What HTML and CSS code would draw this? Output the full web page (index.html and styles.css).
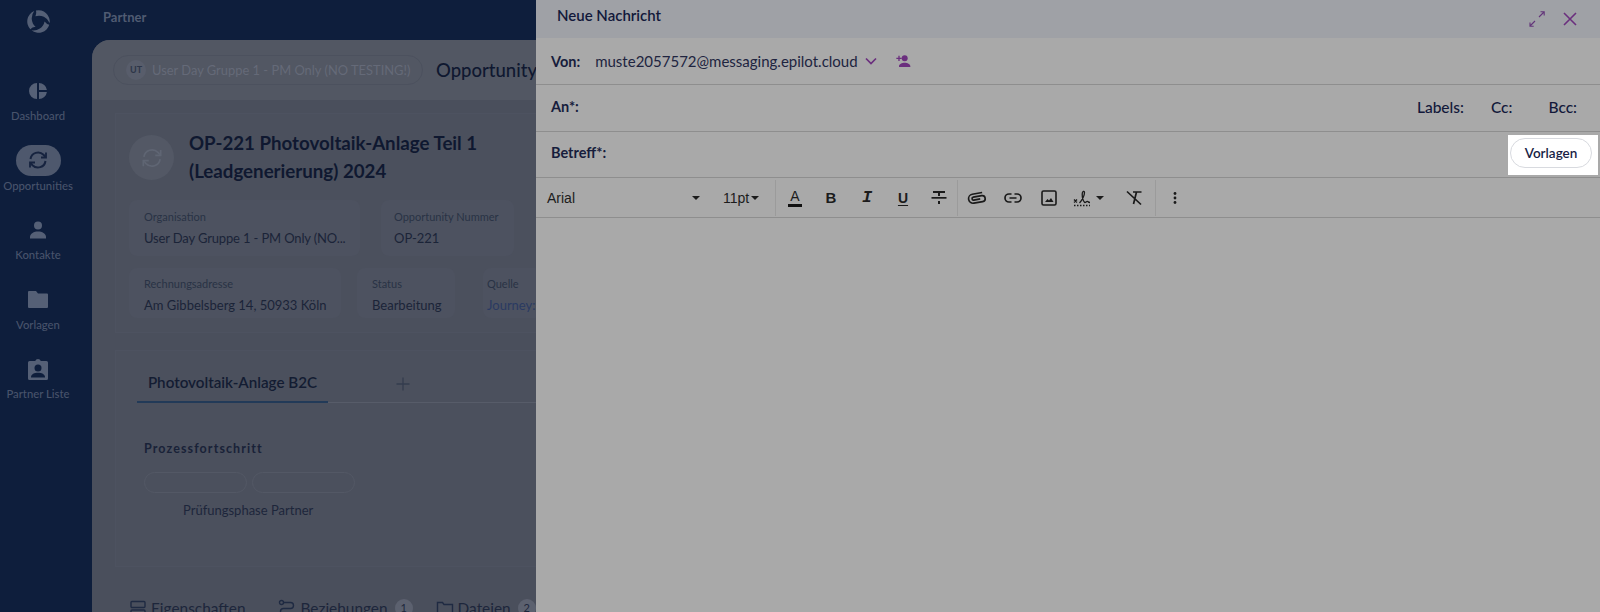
FILE: index.html
```html
<!DOCTYPE html>
<html lang="de">
<head>
    <meta charset="UTF-8">
    <title>Neue Nachricht</title>
    <link rel="stylesheet" href="styles.css">
</head>
<body>
    <div class="app">
        <div class="sidebar">
            <div class="logo">
                <svg width="25" height="25" viewBox="0 0 24 24" fill="#556076">
                    <path d="M9.500 1.500A10.800 10.800 0 0 1 22.700 13.500 11 11 0 0 0 9 7Q10.300 4 9.500 1.500Z"/>
                    <path d="M9.500 1.500A10.800 10.800 0 0 1 22.700 13.500 11 11 0 0 0 9 7Q10.300 4 9.500 1.500Z" transform="rotate(120 12 12)"/>
                    <path d="M9.500 1.500A10.800 10.800 0 0 1 22.700 13.500 11 11 0 0 0 9 7Q10.300 4 9.500 1.500Z" transform="rotate(240 12 12)"/>
                </svg>
            </div>
            <div class="nav_item">
                <div class="nav_icon">
                    <svg width="24" height="24" viewBox="0 0 24 24" fill="#556076"><path d="M11 4v16a8 8 0 0 1 0-16Zm2 0a8 8 0 0 1 7.900 7H13Zm0 9h7.900A8 8 0 0 1 13 20Z"/></svg>
                </div>
                <span>Dashboard</span>
            </div>
            <div class="nav_item nav_active">
                <div class="nav_icon">
                    <svg width="24" height="24" viewBox="0 0 24 24" fill="none" stroke="#16233f" stroke-width="2"><path d="M4.500 11a7.600 7.600 0 0 1 13-4.200L19.500 9"/><path d="M19.500 13a7.600 7.600 0 0 1-13 4.200L4.500 15"/><path d="M20 4.500V9.500h-5" stroke-width="1.800"/><path d="M4 19.500V14.500h5" stroke-width="1.800"/></svg>
                </div>
                <span>Opportunities</span>
            </div>
            <div class="nav_item">
                <div class="nav_icon">
                    <svg width="24" height="24" viewBox="0 0 24 24" fill="#556076"><circle cx="12" cy="7.500" r="4"/><path d="M4 19c0-3.500 4-5.500 8-5.500s8 2 8 5.500v1.500H4Z"/></svg>
                </div>
                <span>Kontakte</span>
            </div>
            <div class="nav_item">
                <div class="nav_icon">
                    <svg width="24" height="24" viewBox="0 0 24 24" fill="#556076"><path d="M3 4h7l2 2.500h9a1 1 0 0 1 1 1V20a1 1 0 0 1-1 1H3a1 1 0 0 1-1-1V5a1 1 0 0 1 1-1Z"/></svg>
                </div>
                <span>Vorlagen</span>
            </div>
            <div class="nav_item">
                <div class="nav_icon">
                    <svg width="24" height="24" viewBox="0 0 24 24"><path fill="#556076" d="M3.500 4h5.700a3 3 0 0 1 5.600 0h5.700a1.500 1.500 0 0 1 1.500 1.500v16a1.500 1.500 0 0 1-1.500 1.500h-17A1.500 1.500 0 0 1 2 21.500v-16A1.500 1.500 0 0 1 3.500 4Z"/><circle cx="12" cy="11" r="3.500" fill="#0e1e3c"/><path fill="#0e1e3c" d="M5 20c0-2.800 3.500-4.300 7-4.300s7 1.500 7 4.300v.5H5Z"/></svg>
                </div>
                <span>Partner Liste</span>
            </div>
        </div>

        <div class="main">
            <div class="topbar">Partner</div>
            <div class="panel">
                <div class="panel_head">
                    <div class="org_pill"><span class="org_badge">UT</span>User Day Gruppe 1 - PM Only (NO TESTING!)</div>
                    <div class="panel_title">Opportunity</div>
                </div>
                <div class="card card_info">
                    <div class="card_top">
                        <div class="round_icon">
                            <svg width="26" height="26" viewBox="0 0 24 24" fill="none" stroke="#5f6573" stroke-width="1.600"><path d="M4.500 11a7.600 7.600 0 0 1 13-4.200L19.500 9"/><path d="M19.500 13a7.600 7.600 0 0 1-13 4.200L4.500 15"/><path d="M20 4.500V9.500h-5"/><path d="M4 19.500V14.500h5"/></svg>
                        </div>
                        <h2>OP-221 Photovoltaik-Anlage Teil 1 (Leadgenerierung) 2024</h2>
                    </div>
                    <div class="fields fields_one">
                        <div class="field field_org"><label>Organisation</label><p>User Day Gruppe 1 - PM Only (NO...</p></div>
                        <div class="field field_num"><label>Opportunity Nummer</label><p>OP-221</p></div>
                    </div>
                    <div class="fields fields_two">
                        <div class="field field_addr"><label>Rechnungsadresse</label><p>Am Gibbelsberg 14, 50933 Köln</p></div>
                        <div class="field field_status"><label>Status</label><p>Bearbeitung</p></div>
                        <div class="field field_source"><label>Quelle</label><p class="link">Journey:</p></div>
                    </div>
                </div>
                <div class="card card_process">
                    <div class="tabs">
                        <div class="tab_active">Photovoltaik-Anlage B2C</div>
                        <div class="tab_add">
                            <svg width="16" height="16" viewBox="0 0 16 16" stroke="#343c4e" stroke-width="1.300"><path d="M8 1.500v13M1.500 8h13"/></svg>
                        </div>
                    </div>
                    <div class="process">
                        <h3>Prozessfortschritt</h3>
                        <div class="steps">
                            <div class="step"></div>
                            <div class="step"></div>
                        </div>
                        <p>Prüfungsphase Partner</p>
                    </div>
                </div>
                <div class="bottom_tabs">
                    <div class="bottom_tab">
                        <svg width="18" height="18" viewBox="0 0 18 18" fill="none" stroke="#1f2a42" stroke-width="1.400"><rect x="2" y="2.500" width="14" height="6" rx="1"/><rect x="2" y="11" width="14" height="6" rx="1"/></svg>
                        Eigenschaften
                    </div>
                    <div class="bottom_tab tab_rel">
                        <svg width="18" height="18" viewBox="0 0 18 18" fill="none" stroke="#1f2a42" stroke-width="1.400"><circle cx="3.500" cy="3.500" r="2"/><path d="M5.500 3.500h7a3 3 0 0 1 0 6h-7a3 3 0 0 0 0 6H15"/></svg>
                        Beziehungen<span class="count">1</span>
                    </div>
                    <div class="bottom_tab tab_files">
                        <svg width="18" height="18" viewBox="0 0 18 18" fill="none" stroke="#1f2a42" stroke-width="1.400"><path d="M1.500 3.500h5l1.500 2h8.500V16h-15Z"/></svg>
                        Dateien<span class="count">2</span>
                    </div>
                </div>
            </div>
        </div>

        <div class="composer">
            <div class="composer_head">
                <span>Neue Nachricht</span>
                <div class="head_actions">
                    <svg width="18" height="18" viewBox="0 0 18 18" fill="none" stroke="#63357a" stroke-width="1.100"><path d="M11 7 16 2M12.500 1.800h3.700V5.500M7 11 2 16M2 12.500v3.700h3.700"/></svg>
                    <svg width="16" height="16" viewBox="0 0 16 16" fill="none" stroke="#6b2f7e" stroke-width="1.600"><path d="m2 2 12 12M14 2 2 14"/></svg>
                </div>
            </div>
            <div class="row">
                <label>Von:</label>
                <span class="sender">muste2057572@messaging.epilot.cloud</span>
                <svg class="chevron" width="14" height="14" viewBox="0 0 14 14" fill="none" stroke="#6b2f7e" stroke-width="1.700"><path d="m2 4.500 5 5 5-5"/></svg>
                <svg class="add_person" width="16" height="16" viewBox="0 0 24 24" fill="#6b2f7e"><circle cx="14.500" cy="8" r="4.500"/><path d="M6 20c0-3.500 4.500-5.500 8.500-5.500S23 16.500 23 20v1H6ZM5 7V4h2v3h3v2H7v3H5V9H2V7Z"/></svg>
            </div>
            <div class="row row_to">
                <label>An*:</label>
                <div class="row_links">
                    <span>Labels:</span>
                    <span>Cc:</span>
                    <span>Bcc:</span>
                </div>
            </div>
            <div class="row row_subject">
                <label>Betreff*:</label>
                <div class="template_box"><button class="btn_template">Vorlagen</button></div>
            </div>
            <div class="toolbar">
                <div class="tool_select select_font">Arial<i class="caret"></i></div>
                <div class="tool_select select_size">11pt<i class="caret"></i></div>
                <div class="tool_group">
                    <div class="tool tool_color">A</div>
                    <div class="tool tool_bold">B</div>
                    <div class="tool tool_italic">I</div>
                    <div class="tool tool_under">U</div>
                    <div class="tool tool_strike">
                        <svg width="24" height="24" viewBox="0 0 24 24" fill="#1a1a1a"><rect x="6" y="5" width="12" height="2"/><rect x="11" y="7" width="2" height="3"/><rect x="4.500" y="11" width="15" height="1.700"/><rect x="11" y="15" width="2" height="3"/></svg>
                    </div>
                </div>
                <div class="tool_group">
                    <div class="tool">
                        <svg width="24" height="24" viewBox="0 0 24 24" fill="none" stroke="#1a1a1a" stroke-width="1.700"><path transform="rotate(-10 12 12)" d="M15 13.500H8.500a1.500 1.500 0 0 1 0-3H17a3 3 0 0 1 0 6H8a4.500 4.500 0 0 1 0-9h10"/></svg>
                    </div>
                    <div class="tool">
                        <svg width="24" height="24" viewBox="0 0 24 24" fill="none" stroke="#1a1a1a" stroke-width="1.700"><path d="M10.500 8H8a4 4 0 0 0 0 8h2.500M13.500 8H16a4 4 0 0 1 0 8h-2.500M8.500 12h7"/></svg>
                    </div>
                    <div class="tool">
                        <svg width="24" height="24" viewBox="0 0 24 24"><rect x="5" y="5" width="14" height="14" rx="1.500" fill="none" stroke="#1a1a1a" stroke-width="1.600"/><path fill="#1a1a1a" d="m8 16 2.500-3 1.500 1.500 2-2.500 2.500 4Z"/></svg>
                    </div>
                    <div class="tool tool_sign">
                        <svg width="24" height="24" viewBox="0 0 24 24" fill="none" stroke="#1a1a1a" stroke-width="1.300"><path d="m4 13.500 3 3M7 13.500l-3 3M9.500 17c3-3 5-8 5-10.500 0-2-2.300-1.500-2.300 1.500 0 3 1 7 2.500 8.500 1 .5 2-2 3-1 .5.500 1 1 2.300 1"/><path d="M4 19.500h16" stroke-dasharray="1.500 1.500"/></svg>
                        <i class="caret"></i>
                    </div>
                    <div class="tool">
                        <svg width="24" height="24" viewBox="0 0 24 24" fill="none" stroke="#1a1a1a" stroke-width="1.700"><path d="M11 6h8.500M14.500 6 11.500 18M5 5.500l14 13"/></svg>
                    </div>
                </div>
                <div class="tool_group tool_group_last">
                    <div class="tool">
                        <svg width="24" height="24" viewBox="0 0 24 24" fill="#1a1a1a"><circle cx="12" cy="7.500" r="1.400"/><circle cx="12" cy="12" r="1.400"/><circle cx="12" cy="16.500" r="1.400"/></svg>
                    </div>
                </div>
            </div>
            <div class="editor"></div>
        </div>
    </div>
</body>
</html>
```
FILE: styles.css
```css
* {
    margin: 0;
    padding: 0;
    box-sizing: border-box;
}
body {
    font-family: "Lato", "Open Sans", sans-serif;
    overflow: hidden;
    height: 612px;
    background-color: #0e1e3c;
}
.app {
    display: flex;
    height: 612px;
    position: relative;
    overflow: hidden;
}

/* sidebar */
.sidebar {
    width: 92px;
    flex-shrink: 0;
    padding-right: 16px;
    background-color: #0e1e3c;
}
.logo {
    height: 42px;
    display: flex;
    align-items: center;
    justify-content: center;
    margin-bottom: 33px;
}
.nav_item {
    height: 69.500px;
    display: flex;
    flex-direction: column;
    align-items: center;
    font-size: 11.300px;
    color: #48536b;
    font-weight: 500;
}
.nav_icon {
    width: 45px;
    height: 31px;
    display: flex;
    align-items: center;
    justify-content: center;
    border-radius: 16px;
    margin-bottom: 3px;
}
.nav_active .nav_icon {
    background-color: #4e586d;
}

/* page behind */
.main {
    flex: 1;
    min-width: 0;
    display: flex;
    flex-direction: column;
}
.topbar {
    height: 40px;
    padding: 0 11px;
    font-size: 13px;
    font-weight: 700;
    color: #505b72;
    line-height: 35px;
}
.panel {
    flex: 1;
    background-color: #4a4f5c;
    border-top-left-radius: 18px;
    overflow: hidden;
}
.panel_head {
    height: 60px;
    padding: 0 21px;
    display: flex;
    align-items: center;
    background-color: #525763;
}
.org_pill {
    width: 310px;
    height: 30px;
    border: 1px solid #4c515e;
    border-radius: 15px;
    display: flex;
    align-items: center;
    padding-left: 12px;
    font-size: 12.900px;
    color: #656a78;
    white-space: nowrap;
    flex-shrink: 0;
}
.org_badge {
    width: 20px;
    height: 20px;
    margin-right: 6px;
    border-radius: 50%;
    background-color: #585d6b;
    color: #2d3649;
    font-size: 9px;
    font-weight: 700;
    line-height: 20px;
    text-align: center;
    flex-shrink: 0;
}
.panel_title {
    margin-left: 13px;
    font-size: 18.500px;
    font-weight: 500;
    color: #0f1830;
}
.card {
    margin-left: 23px;
    background-color: #4b505d;
    border: 1px solid #4d5260;
    border-right: none;
}
.card_info {
    height: 220px;
    margin-top: 13px;
    padding: 21px 13px 0;
}
.card_top {
    display: flex;
    height: 65px;
}
.round_icon {
    width: 45px;
    height: 45px;
    border-radius: 50%;
    background-color: #535865;
    display: flex;
    align-items: center;
    justify-content: center;
    flex-shrink: 0;
    margin-right: 15px;
}
.card_top h2 {
    width: 330px;
    margin-top: -6px;
    font-size: 18.700px;
    line-height: 28px;
    font-weight: 700;
    color: #0f1830;
}
.fields {
    display: flex;
    white-space: nowrap;
}
.field {
    background-color: #4d5260;
    border-radius: 8px;
    padding: 9px 10px 0 15px;
    height: 56px;
    flex-shrink: 0;
    overflow: hidden;
}
.field label {
    display: block;
    font-size: 11px;
    line-height: 16px;
    color: #293245;
}
.field p {
    margin-top: 1px;
    font-size: 13px;
    line-height: 24px;
    color: #1b2438;
}
.field p.link {
    color: #2a3a62;
}
.field_org p {
    letter-spacing: -0.150px;
}
.fields_one {
    gap: 21px;
}
.field_org {
    width: 231px;
}
.field_num {
    width: 133px;
    padding-left: 13px;
}
.fields_two {
    margin-top: 12px;
}
.fields_two .field {
    height: 50px;
    padding-top: 8px;
}
.field_addr {
    width: 212px;
}
.field_status {
    width: 98px;
    margin-left: 16px;
}
.field_source {
    width: 60px;
    margin-left: 28px;
    padding: 8px 0 0 4px;
}
.card_process {
    height: 217px;
    margin-top: 17px;
}
.tabs {
    margin: 15px 0 0 21px;
    display: flex;
    align-items: flex-end;
    height: 37px;
    border-bottom: 1px solid #575c69;
}
.tab_active {
    width: 191px;
    height: 38px;
    margin-bottom: -1px;
    border-bottom: 2px solid #223a58;
    text-align: center;
    font-size: 15.200px;
    font-weight: 600;
    line-height: 35px;
    color: #131c32;
}
.tab_add {
    margin-left: 67px;
    height: 36px;
    display: flex;
    align-items: center;
}
.process {
    padding: 38px 0 0 28px;
}
.process h3 {
    font-size: 12.500px;
    line-height: 16px;
    font-weight: 700;
    letter-spacing: 1.100px;
    color: #192238;
}
.steps {
    display: flex;
    gap: 5px;
    margin-top: 15px;
}
.step {
    width: 103px;
    height: 21px;
    border: 1px solid #535865;
    border-radius: 11px;
}
.process p {
    margin: 9px 0 0 39px;
    font-size: 13px;
    line-height: 17px;
    color: #1d263b;
}
.bottom_tabs {
    display: flex;
    padding: 29px 0 0 37px;
    font-size: 15.400px;
    color: #1d263b;
    white-space: nowrap;
}
.bottom_tab {
    display: flex;
    align-items: center;
    gap: 4px;
    height: 24px;
}
.tab_rel {
    margin-left: 33px;
}
.tab_files {
    margin-left: 23px;
}
.count {
    width: 18px;
    height: 18px;
    margin-left: 3px;
    border-radius: 50%;
    background-color: #5c616f;
    font-size: 11px;
    line-height: 18px;
    text-align: center;
}

/* composer */
.composer {
    position: absolute;
    top: 0;
    right: 0;
    bottom: 0;
    width: 1064px;
    background-color: #a9a9a9;
    display: flex;
    flex-direction: column;
    color: #12183a;
}
.composer_head {
    height: 38px;
    flex-shrink: 0;
    padding: 0 21px;
    display: flex;
    justify-content: space-between;
    align-items: center;
    background-color: #9fa1a6;
    font-size: 15px;
    font-weight: 600;
}
.composer_head > span {
    margin-top: -8px;
}
.head_actions {
    display: flex;
    align-items: center;
    gap: 16px;
    margin-right: 1px;
}
.row {
    height: 47px;
    flex-shrink: 0;
    display: flex;
    align-items: center;
    padding-left: 15px;
    border-bottom: 1px solid #8e8e8e;
    font-size: 15px;
}
.row label {
    font-size: 14.500px;
    font-weight: 700;
    color: #171d3c;
}
.sender {
    margin-left: 15px;
    color: #20243f;
}
.chevron {
    margin-left: 6px;
}
.add_person {
    margin-left: 17px;
}
.row_to {
    padding-bottom: 2px;
}
.row_to label {
    margin-top: -1px;
}
.row_links {
    margin-left: auto;
    padding-right: 23px;
    display: flex;
    gap: 27px;
    font-size: 15.500px;
    font-weight: 500;
}
.row_links span:last-child {
    margin-left: 9px;
}
.row_subject {
    height: 46px;
}
.row_subject label {
    margin-top: -4px;
}
.template_box {
    margin-left: auto;
    margin-right: 2px;
    width: 90px;
    height: 40px;
    padding: 3px 6px 0 2px;
    background-color: #fff;
}
.btn_template {
    width: 82px;
    height: 30px;
    border: 1px solid #d8dadf;
    border-radius: 15px;
    background-color: #fff;
    font-family: inherit;
    font-size: 13.500px;
    font-weight: 600;
    color: #171d45;
}
.toolbar {
    height: 40px;
    flex-shrink: 0;
    display: flex;
    align-items: center;
    border-bottom: 1px solid #8e8e8e;
    font-family: "Liberation Sans", sans-serif;
    font-size: 14px;
    color: #1c1c1c;
}
.tool_select {
    display: flex;
    align-items: center;
    justify-content: space-between;
    height: 36px;
}
.select_font {
    width: 164px;
    padding: 0 0 0 11px;
}
.select_size {
    width: 65px;
    margin-left: 10px;
    padding: 0 16px 0 13px;
}
.caret {
    width: 0;
    height: 0;
    border-left: 4px solid transparent;
    border-right: 4px solid transparent;
    border-top: 4px solid #1c1c1c;
}
.tool_group {
    display: flex;
    align-items: center;
    height: 36px;
    padding: 0 1px;
    border-left: 1px solid #9b9b9b;
}
.tool_group_last {
    margin-left: 2px;
}
.tool {
    width: 36px;
    height: 36px;
    display: flex;
    align-items: center;
    justify-content: center;
    font-size: 14px;
}
.tool_color {
    flex-direction: column;
    line-height: 14px;
}
.tool_color::after {
    content: "";
    width: 14px;
    height: 3px;
    margin-top: 1px;
    background-color: #111;
}
.tool_bold {
    font-weight: 700;
    font-size: 15px;
}
.tool_italic {
    font-family: "Liberation Mono", monospace;
    font-style: italic;
    font-weight: 700;
    font-size: 17px;
}
.tool_under {
    font-weight: 700;
    font-size: 14px;
    text-decoration: underline;
    text-underline-offset: 2px;
}
.tool_strike {
    margin-right: -1px;
}
.tool_sign {
    width: 52px;
    justify-content: flex-start;
    padding-left: 3px;
    margin-right: -3px;
}
.tool_sign .caret {
    margin-left: 2px;
}
.editor {
    flex: 1;
}
```
